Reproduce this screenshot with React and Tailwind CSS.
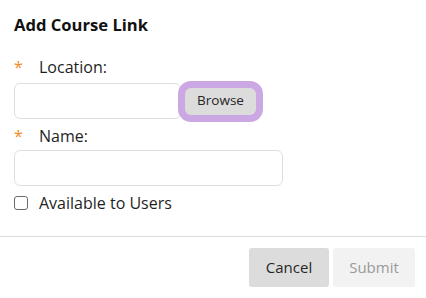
export default function App() {
  return (
    <div
      className="w-[426px] h-[298px] bg-white text-[#1f1f1f] overflow-hidden"
      style={{ fontFamily: '"Open Sans", "Noto Sans", sans-serif' }}
    >
      <div className="px-[14px] pt-[14px]">
        <h1 className="text-[16.6px] font-bold leading-[22px] text-[#111]">Add Course Link</h1>

        <div className="mt-[20px] flex items-center text-[16px] leading-[22px]">
          <span className="w-[25px] text-[#f08a24] text-[16px]">*</span>
          <span>Location:</span>
        </div>
        <div className="mt-[5px] flex items-center">
          <div className="w-[167px] h-[36px] border border-[#dedede] rounded-[6px] bg-white" />
          <button className="ml-[4px] w-[71px] h-[27px] rounded-[6px] bg-[#dcdcdc] text-[13.5px] text-[#262626] leading-none shadow-[0_0_0_7px_#cba7e3]">
            Browse
          </button>
        </div>

        <div className="mt-[6px] flex items-center text-[16px] leading-[22px]">
          <span className="w-[25px] text-[#f08a24] text-[16px]">*</span>
          <span>Name:</span>
        </div>
        <div className="mt-[3px] w-[269px] h-[36px] border border-[#dedede] rounded-[6px] bg-white" />

        <div className="mt-[6px] flex items-center text-[16px] leading-[22px]">
          <span className="w-[14px] h-[14px] border border-[#6b6b6b] rounded-[3px] bg-white" />
          <span className="ml-[11px]">Available to Users</span>
        </div>
      </div>

      <div className="mt-[22px] border-t border-[#dcdcdc]" />

      <div className="flex justify-end gap-[4px] pr-[11px] pt-[11px]">
        <button className="w-[80px] h-[39px] rounded-[3px] bg-[#dcdcdc] text-[15px] text-[#262626]">Cancel</button>
        <button className="w-[82px] h-[39px] rounded-[3px] bg-[#f2f2f2] text-[15px] text-[#9a9a9a]">Submit</button>
      </div>
    </div>
  );
}
